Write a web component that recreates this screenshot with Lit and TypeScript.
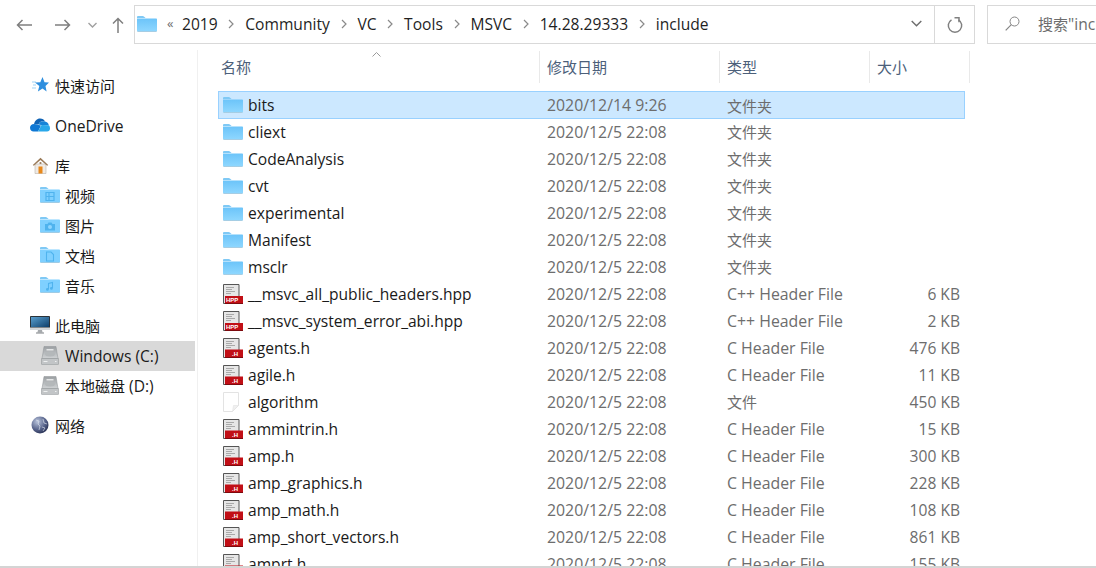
import {LitElement, html, svg, css} from 'lit';
import {customElement} from 'lit/decorators.js';

const folder = (w = 20, h = 16) => html`<svg class="ico" width=${w} height=${h} viewBox="0 0 20 16">
  <defs><linearGradient id="fg" x1="0" y1="0" x2="0" y2="1"><stop offset="0" stop-color="#6cc4f9"/><stop offset="1" stop-color="#90d8ff"/></linearGradient></defs>
  <path d="M0 1.2C0 .5.5 0 1.2 0h4.600c.5 0 .8.2 1.100.5L8.600 2H0z" fill="#7fc9f5"/>
  <path d="M0 2.600h19c.6 0 1 .4 1 1v11.200c0 .7-.5 1.200-1.200 1.200H1.200C.5 16 0 15.500 0 14.800z" fill="url(#fg)"/>
  <path d="M.5 15.500h19" stroke="#b9c6cf" stroke-width=".8" opacity=".7"/>
</svg>`;

const libGlyphs: Record<string, unknown> = {
  video: svg`<path d="M6 5.500h8v8H6zM6 9.500h8M9 5.500v8" fill="none" stroke="#4fb3ee" stroke-width="1.200"/>`,
  photo: svg`<path d="M5 7h2.500l1-1.500h3l1 1.500H15v6.500H5z" fill="#4fb3ee"/><circle cx="10" cy="10" r="2" fill="#8fd6ff"/>`,
  doc: svg`<path d="M6.500 5h4.500l2.500 2.500v6.500h-7z" fill="none" stroke="#4fb3ee" stroke-width="1.100"/>`,
  music: svg`<path d="M8.500 12V6.500l4-1V11" fill="none" stroke="#4fb3ee" stroke-width="1.100"/><circle cx="7.400" cy="12.400" r="1.400" fill="#4fb3ee"/><circle cx="11.400" cy="11.400" r="1.400" fill="#4fb3ee"/>`,
};

const libFolder = (kind: string) => html`<svg class="ico" width="20" height="16" viewBox="0 0 20 16">
  <path d="M0 1.200C0 .5.5 0 1.200 0h4.600c.5 0 .8.2 1.100.5L8.600 2H0z" fill="#7fc9f5"/>
  <path d="M0 2.600h19c.6 0 1 .4 1 1v11.200c0 .7-.5 1.200-1.200 1.200H1.200C.5 16 0 15.500 0 14.800z" fill="#7fd0ff"/>
  ${libGlyphs[kind]}
  <path d="M.5 15.500h19" stroke="#b9c6cf" stroke-width=".8" opacity=".7"/>
</svg>`;

const star = html`<svg class="ico" width="17" height="16" viewBox="0 0 17 16">
  <path d="M0 5h4M1 8h3M0 11h4" stroke="#9fd3f5" stroke-width="1"/>
  <path d="M10.500 0l2 5.200 4.500.3-3.500 3.400 1.100 5.600-4.100-2.900-4.600 2.900 1.400-5.600L3 5.500l5.300-.3z" fill="#2f8fde"/>
</svg>`;

const cloud = html`<svg class="ico" width="20" height="14" viewBox="0 0 20 14">
  <path d="M4 6.500C4.500 3 7 .5 10 .5c2.500 0 4.200 1.200 5 3-3-1-5.500 0-6.500 3z" fill="#0f63b5"/>
  <path d="M8.500 6.500c1-3 4-4 6.500-3 2 .2 3.500 1.700 3.800 3.800L11 7z" fill="#1684d8"/>
  <path d="M4 6c-2.200 0-4 1.600-4 3.800C0 12 1.500 13.500 3.500 13.500H8l3-6z" fill="#0f78d4"/>
  <path d="M8 13.500h9c1.700 0 3-1.300 3-3 0-1.400-.5-2.500-1.200-3.200L11.500 7z" fill="#29a8ea"/>
</svg>`;

const house = html`<svg class="ico" width="17" height="17" viewBox="0 0 17 17">
  <path d="M3 7h11v9.500H3z" fill="#efeae4" stroke="#b8b2aa" stroke-width=".6"/>
  <path d="M8.500 .8L.8 8l1 .8 6.700-5.900 6.700 5.900 1-.8z" fill="#9a7a58"/>
  <path d="M6.500 9.500h4v7h-4z" fill="#e8881a"/>
  <circle cx="8.500" cy="6" r="1.100" fill="#9a7a58"/>
</svg>`;

const monitor = html`<svg class="ico" width="20" height="18" viewBox="0 0 20 18">
  <defs><linearGradient id="sc" x1="0" y1="0" x2="1" y2="1"><stop offset="0" stop-color="#5a9fce"/><stop offset="1" stop-color="#0f3f6b"/></linearGradient></defs>
  <rect x="0" y="0" width="20" height="13.500" rx=".8" fill="#2b3238"/>
  <rect x="1" y="1" width="18" height="10" fill="url(#sc)"/>
  <rect x="0" y="11.500" width="20" height="2.500" fill="#d5d7d9"/>
  <path d="M8 14h4l.6 2.500H7.400z" fill="#a6aaad"/><path d="M6 16.500h8v1H6z" fill="#7b7f82"/>
</svg>`;

const disk = html`<svg class="ico" width="18" height="19" viewBox="0 0 18 19">
  <defs><linearGradient id="hd" x1="0" y1="0" x2="0" y2="1"><stop offset="0" stop-color="#9b9fa2"/><stop offset="1" stop-color="#cfd2d4"/></linearGradient></defs>
  <path d="M3 .5h12l2 12H1z" fill="url(#hd)" stroke="#8f9396" stroke-width=".5"/>
  <path d="M5.500 3h7v1.500h-7z" fill="#e4e6e7"/>
  <ellipse cx="9" cy="8" rx="5" ry="2.500" fill="#b4b8ba"/>
  <path d="M.5 12.500h17V18a.6.6 0 0 1-.6.6H1.100A.6.6 0 0 1 .5 18z" fill="#c2c5c7" stroke="#8a8e91" stroke-width=".5"/>
  <path d="M2.500 15.500h4M14 15.500h1.500" stroke="#eef0f0" stroke-width="1.200"/>
</svg>`;

const globe = html`<svg class="ico" width="18" height="18" viewBox="0 0 18 18">
  <defs><radialGradient id="gl" cx=".35" cy=".3" r=".8"><stop offset="0" stop-color="#b9c4dc"/><stop offset=".6" stop-color="#56628a"/><stop offset="1" stop-color="#20284a"/></radialGradient></defs>
  <circle cx="9" cy="9" r="8.500" fill="url(#gl)"/>
  <path d="M5 4l3 1-1 3 2 2-1 4M12 3l1 4 3 1M11 11l3 1-2 3" fill="none" stroke="#dde3ee" stroke-width=".8" opacity=".8"/>
</svg>`;

const fileIcon = (label: string) => html`<svg class="ico" width="20" height="20" viewBox="0 0 20 20">
  <path d="M.5.500h15.500v19H.5z" fill="#e6e6e6" stroke="#555"/>
  <path d="M3 3.500h8M3 5.500h6M3 7.500h9M3 9.500h5" stroke="#a9a9a9" stroke-width="1"/>
  <rect x="2" y="${label === 'HPP' ? 12 : 11.5}" width="18" height="${label === 'HPP' ? 7.5 : 8}" fill="#c10f16"/>
  <path d="M2 19.500h18" stroke="#7d0a0e"/>
  <text x="${label === 'HPP' ? 3 : 9}" y="18.300" class="tag">${label}</text>
</svg>`;

const plainFile = html`<svg class="ico" width="16" height="20" viewBox="0 0 16 20">
  <path d="M.5.500h15v13l-6 6H.5z" fill="#fff" stroke="#e3e3e3"/>
  <path d="M15.500 13.500h-5l-1 6z" fill="#f0f0f0" stroke="#e3e3e3" stroke-width=".6"/>
</svg>`;

type FileRow = {name: string; date: string; type: string; size?: string; icon: unknown; cjk?: boolean};

const dirRow = (name: string, date: string): FileRow => ({name, date, type: '文件夹', icon: folder(), cjk: true});
const hRow = (name: string, size: string, date = '2020/12/5 22:08'): FileRow => ({
  name, date, type: 'C Header File', size, icon: fileIcon('.H'),
});

const FILES: FileRow[] = [
  dirRow('bits', '2020/12/14 9:26'),
  dirRow('cliext', '2020/12/5 22:08'),
  dirRow('CodeAnalysis', '2020/12/5 22:08'),
  dirRow('cvt', '2020/12/5 22:08'),
  dirRow('experimental', '2020/12/5 22:08'),
  dirRow('Manifest', '2020/12/5 22:08'),
  dirRow('msclr', '2020/12/5 22:08'),
  {name: '__msvc_all_public_headers.hpp', date: '2020/12/5 22:08', type: 'C++ Header File', size: '6 KB', icon: fileIcon('HPP')},
  {name: '__msvc_system_error_abi.hpp', date: '2020/12/5 22:08', type: 'C++ Header File', size: '2 KB', icon: fileIcon('HPP')},
  hRow('agents.h', '476 KB'),
  hRow('agile.h', '11 KB'),
  {name: 'algorithm', date: '2020/12/5 22:08', type: '文件', size: '450 KB', icon: plainFile, cjk: true},
  hRow('ammintrin.h', '15 KB'),
  hRow('amp.h', '300 KB'),
  hRow('amp_graphics.h', '228 KB'),
  hRow('amp_math.h', '108 KB'),
  hRow('amp_short_vectors.h', '861 KB'),
  hRow('amprt.h', '155 KB'),
];

const CRUMBS = ['2019', 'Community', 'VC', 'Tools', 'MSVC', '14.28.29333', 'include'];

@customElement('app-root')
export class AppRoot extends LitElement {
  static styles = css`
    :host {
      display: block;
      width: 1096px;
      height: 568px;
      overflow: hidden;
      background: #fff;
      font-family: "Open Sans", "Noto Sans CJK SC", sans-serif;
      font-size: 15.6px;
      color: #1a1a1a;
    }
    .window {
      height: 568px;
      display: flex;
      flex-direction: column;
      border-bottom: 2px solid #d4d4d4;
      box-sizing: border-box;
    }
    .ico {
      display: block;
      flex: none;
    }
    .tag {
      font: bold 6px "Liberation Sans", sans-serif;
      fill: #fff;
    }
    .cjk {
      font-family: "Noto Sans CJK SC", sans-serif;
      font-size: 15px;
    }

    .toolbar {
      flex: none;
      height: 50px;
      box-sizing: border-box;
      padding: 5px 0 6px 16px;
      display: flex;
      align-items: stretch;
    }
    .nav {
      display: flex;
      align-items: center;
      color: #7f7f7f;
    }
    .nav .back { margin-right: 23px; }
    .nav .fwd { margin-right: 17px; }
    .nav .down { margin-right: 15px; }
    .nav .up { margin-right: 10px; }
    .address {
      width: 841px;
      box-sizing: border-box;
      border: 1px solid #d9d9d9;
      padding-bottom: 2px;
      display: flex;
      align-items: center;
      flex: none;
    }
    .address .folder { margin: 0 10px 0 2px; }
    .quote {
      font-size: 13px;
      color: #6d6d6d;
      width: 15px;
      margin-top: -2px;
    }
    .crumb {
      display: flex;
      align-items: center;
      color: #1f1f1f;
    }
    .crumb svg { margin: 0 10.8px; }
    .grow { flex: 1; }
    .drop {
      width: 36px;
      display: flex;
      justify-content: center;
    }
    .refresh {
      width: 39px;
      align-self: stretch;
      margin-bottom: -2px;
      border-left: 1px solid #d9d9d9;
      display: flex;
      align-items: center;
      justify-content: center;
    }
    .search {
      flex: none;
      margin-left: 12px;
      width: 200px;
      box-sizing: border-box;
      border: 1px solid #d9d9d9;
      display: flex;
      align-items: center;
      padding: 0 0 2px 17px;
      gap: 18px;
      color: #6d6d6d;
    }

    .body {
      flex: 1;
      min-height: 0;
      display: flex;
      overflow: hidden;
    }
    .side {
      flex: none;
      width: 198px;
      box-sizing: border-box;
      border-right: 1px solid #f0f0f0;
      padding: 21px 2px 0 0;
    }
    .group { margin-bottom: 10px; }
    .nav-row {
      height: 30px;
      box-sizing: border-box;
      padding: 0 0 2px 30px;
      display: flex;
      align-items: center;
      gap: 5px;
      color: #1a1a1a;
    }
    .nav-row .slot {
      width: 20px;
      display: flex;
      justify-content: center;
    }
    .nav-row .latin { padding-top: 2px; }
    .nav-row.sub { padding-left: 40px; }
    .nav-row.current { background: #d9d9d9; }

    .files {
      flex: 1;
      min-width: 0;
      position: relative;
      padding: 1px 0 0 20px;
    }
    .sort {
      position: absolute;
      left: 174px;
      top: 2px;
    }
    .head {
      display: grid;
      grid-template-columns: 322px 180px 150px 100px;
      height: 32px;
      margin-bottom: 8px;
    }
    .head div {
      border-right: 1px solid #e9e9e9;
      padding: 0 0 2px 7px;
      display: flex;
      align-items: center;
      color: #4c607a;
    }
    .head div:first-child { padding-left: 3px; }
    .row {
      display: grid;
      grid-template-columns: 30px 299px 180px 143px 90px;
      width: 747px;
      height: 27px;
      align-items: center;
      box-sizing: border-box;
    }
    .row.selected {
      height: 28px;
      margin-bottom: -1px;
      background: #cce8ff;
      box-shadow: inset 0 0 0 1px #99d1ff;
    }
    .row .icon { padding-left: 5px; }
    .row .muted { color: #6d6d6d; font-size: 15.85px; }
    .row .muted.cjk { font-size: 15px; }
    .row .size { text-align: right; color: #6d6d6d; }
  `;

  private chevron() {
    return html`<svg class="ico" width="6" height="10" viewBox="0 0 6 10"><path d="M1 1l4 4-4 4" fill="none" stroke="#8a8a8a" stroke-width="1.200"/></svg>`;
  }

  private toolbar() {
    return html`<div class="toolbar">
      <div class="nav">
        <svg class="ico back" width="16" height="12" viewBox="0 0 16 12"><path d="M16 6H1.500M6.500 1l-5 5 5 5" fill="none" stroke="currentColor" stroke-width="1.500"/></svg>
        <svg class="ico fwd" width="16" height="12" viewBox="0 0 16 12"><path d="M0 6h14.500M9.500 1l5 5-5 5" fill="none" stroke="currentColor" stroke-width="1.500"/></svg>
        <svg class="ico down" width="9" height="6" viewBox="0 0 9 6"><path d="M.5 1l4 4 4-4" fill="none" stroke="#a0a0a0" stroke-width="1.400"/></svg>
        <svg class="ico up" width="12" height="16" viewBox="0 0 12 16"><path d="M6 16V1.500M1 6.500l5-5 5 5" fill="none" stroke="currentColor" stroke-width="1.500"/></svg>
      </div>
      <div class="address">
        <span class="folder">${folder()}</span>
        <span class="quote">«</span>
        ${CRUMBS.map((c, i) => html`<span class="crumb">${c}${i < CRUMBS.length - 1 ? this.chevron() : ''}</span>`)}
        <span class="grow"></span>
        <span class="drop"><svg class="ico" width="11" height="7" viewBox="0 0 11 7"><path d="M.7 1l4.800 4.800L10.300 1" fill="none" stroke="#6d6d6d" stroke-width="1.400"/></svg></span>
        <span class="refresh"><svg class="ico" width="16" height="16" viewBox="0 0 16 16"><path d="M11.500 2.800A6.700 6.700 0 1 1 4.500 2.800" fill="none" stroke="#808080" stroke-width="1.500"/><path d="M7.500 .7h4.500v4.500" fill="none" stroke="#808080" stroke-width="1.500"/></svg></span>
      </div>
      <div class="search">
        <svg class="ico" width="15" height="15" viewBox="0 0 15 15"><circle cx="9.500" cy="5.500" r="4.500" fill="none" stroke="#858585"/><path d="M6.300 8.700L.7 14.300" stroke="#858585" stroke-width="1.200"/></svg>
        <span><span class="cjk">搜索</span>"include"</span>
      </div>
    </div>`;
  }

  private sidebar() {
    return html`<nav class="side">
      <div class="group">
        <div class="nav-row"><span class="slot">${star}</span><span class="cjk">快速访问</span></div>
      </div>
      <div class="group">
        <div class="nav-row"><span class="slot">${cloud}</span><span class="latin">OneDrive</span></div>
      </div>
      <div class="group">
        <div class="nav-row"><span class="slot">${house}</span><span class="cjk">库</span></div>
        <div class="nav-row sub"><span class="slot">${libFolder('video')}</span><span class="cjk">视频</span></div>
        <div class="nav-row sub"><span class="slot">${libFolder('photo')}</span><span class="cjk">图片</span></div>
        <div class="nav-row sub"><span class="slot">${libFolder('doc')}</span><span class="cjk">文档</span></div>
        <div class="nav-row sub"><span class="slot">${libFolder('music')}</span><span class="cjk">音乐</span></div>
      </div>
      <div class="group">
        <div class="nav-row"><span class="slot">${monitor}</span><span class="cjk">此电脑</span></div>
        <div class="nav-row sub current"><span class="slot">${disk}</span><span class="latin">Windows (C:)</span></div>
        <div class="nav-row sub"><span class="slot">${disk}</span><span class="latin"><span class="cjk">本地磁盘</span> (D:)</span></div>
      </div>
      <div class="group">
        <div class="nav-row"><span class="slot">${globe}</span><span class="cjk">网络</span></div>
      </div>
    </nav>`;
  }

  private fileList() {
    return html`<section class="files">
      <svg class="sort ico" width="9" height="5" viewBox="0 0 9 5"><path d="M.5 4.500l4-4 4 4" fill="none" stroke="#9a9a9a"/></svg>
      <div class="head cjk">
        <div>名称</div><div>修改日期</div><div>类型</div><div>大小</div>
      </div>
      ${FILES.map((f, i) => html`<div class="row ${i === 0 ? 'selected' : ''}">
        <span class="icon">${f.icon}</span>
        <span>${f.name}</span>
        <span class="muted">${f.date}</span>
        <span class="muted ${f.cjk ? 'cjk' : ''}">${f.type}</span>
        <span class="size">${f.size ?? ''}</span>
      </div>`)}
    </section>`;
  }

  render() {
    return html`<div class="window">
      ${this.toolbar()}
      <div class="body">${this.sidebar()}${this.fileList()}</div>
    </div>`;
  }
}
